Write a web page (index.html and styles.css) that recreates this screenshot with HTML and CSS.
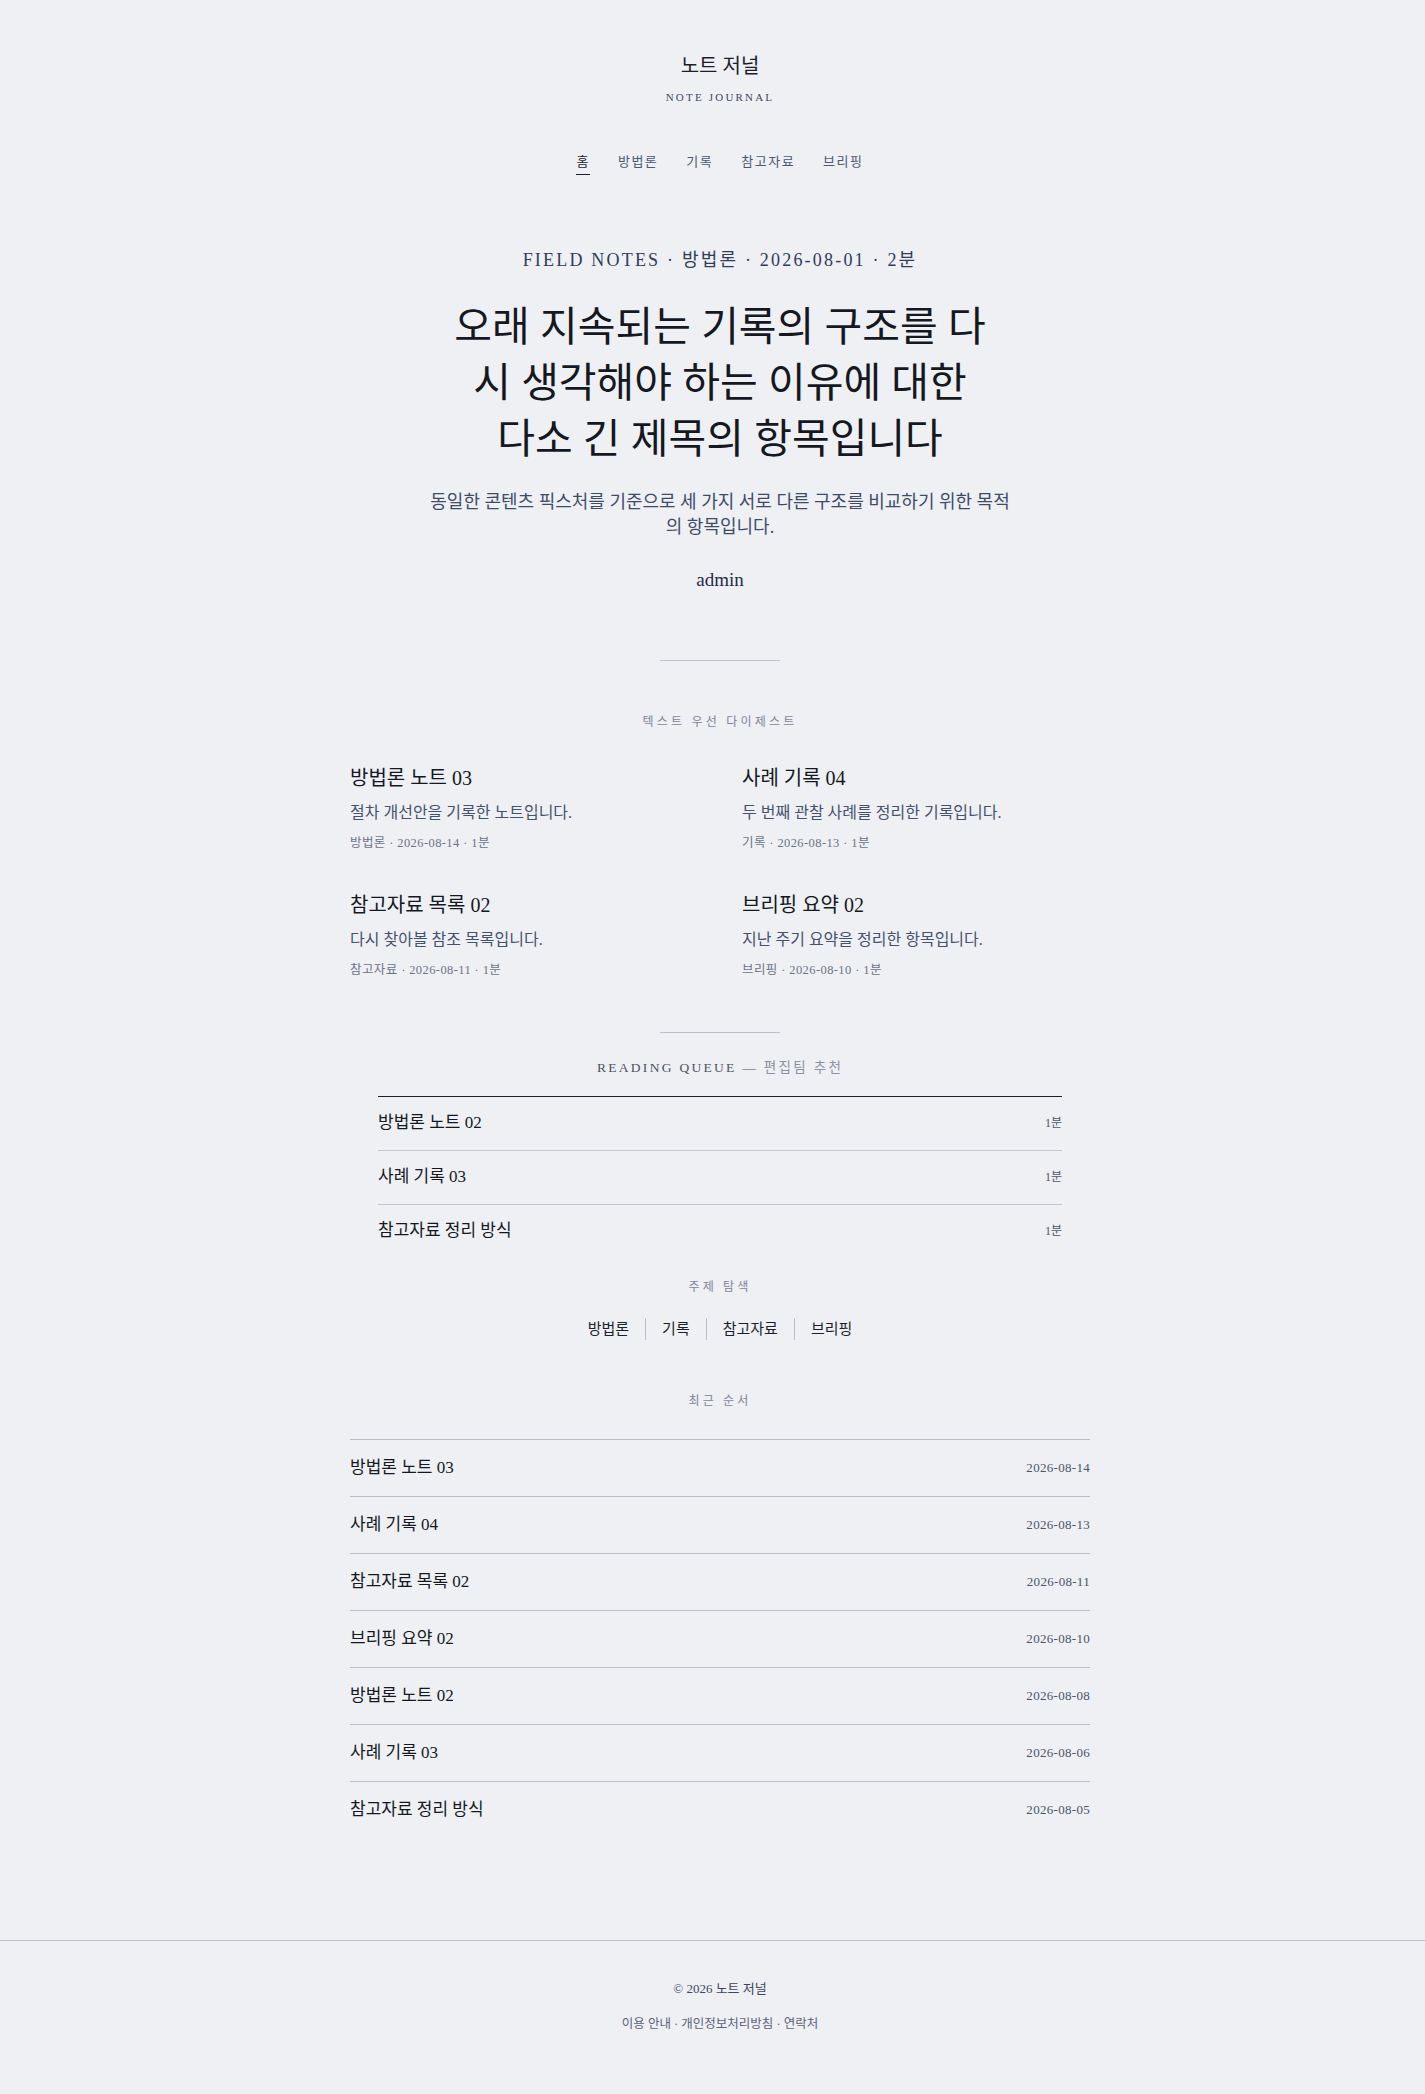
FILE: index.html
```html
<!DOCTYPE html>
<html lang="ko">
<head>
<meta charset="utf-8">
<title>노트 저널</title>
<link rel="stylesheet" href="styles.css">
</head>
<body>
<div class="page">
  <header class="site-header">
    <div class="brand">노트 저널</div>
    <div class="brand-sub">NOTE JOURNAL</div>
    <nav class="nav">
      <a class="nav-link active" href="#">홈</a>
      <a class="nav-link" href="#">방법론</a>
      <a class="nav-link" href="#">기록</a>
      <a class="nav-link" href="#">참고자료</a>
      <a class="nav-link" href="#">브리핑</a>
    </nav>
  </header>

  <main class="main">
    <section class="hero">
      <div class="hero-meta">FIELD NOTES · 방법론 · 2026-08-01 · 2분</div>
      <h1 class="hero-title">오래 지속되는 기록의 구조를 다<br>시 생각해야 하는 이유에 대한<br>다소 긴 제목의 항목입니다</h1>
      <p class="hero-sub">동일한 콘텐츠 픽스처를 기준으로 세 가지 서로 다른 구조를 비교하기 위한 목적<br>의 항목입니다.</p>
      <div class="hero-author">admin</div>
    </section>

    <div class="rule"></div>

    <section class="digest">
      <h2 class="label">텍스트 우선 다이제스트</h2>
      <div class="digest-grid">
        <article class="digest-item">
          <h3 class="digest-title">방법론 노트 03</h3>
          <p class="digest-desc">절차 개선안을 기록한 노트입니다.</p>
          <div class="digest-meta">방법론 · 2026-08-14 · 1분</div>
        </article>
        <article class="digest-item">
          <h3 class="digest-title">사례 기록 04</h3>
          <p class="digest-desc">두 번째 관찰 사례를 정리한 기록입니다.</p>
          <div class="digest-meta">기록 · 2026-08-13 · 1분</div>
        </article>
        <article class="digest-item">
          <h3 class="digest-title">참고자료 목록 02</h3>
          <p class="digest-desc">다시 찾아볼 참조 목록입니다.</p>
          <div class="digest-meta">참고자료 · 2026-08-11 · 1분</div>
        </article>
        <article class="digest-item">
          <h3 class="digest-title">브리핑 요약 02</h3>
          <p class="digest-desc">지난 주기 요약을 정리한 항목입니다.</p>
          <div class="digest-meta">브리핑 · 2026-08-10 · 1분</div>
        </article>
      </div>
    </section>

    <div class="rule rule-2"></div>

    <section class="queue">
      <h2 class="queue-heading">READING QUEUE <span class="queue-dash">—</span> <span class="queue-ko">편집팀 추천</span></h2>
      <ul class="queue-list">
        <li class="queue-row"><span class="queue-title">방법론 노트 02</span><span class="queue-time">1분</span></li>
        <li class="queue-row"><span class="queue-title">사례 기록 03</span><span class="queue-time">1분</span></li>
        <li class="queue-row"><span class="queue-title">참고자료 정리 방식</span><span class="queue-time">1분</span></li>
      </ul>
    </section>

    <section class="topics">
      <h2 class="label">주제 탐색</h2>
      <div class="topic-links">
        <a class="topic" href="#">방법론</a>
        <a class="topic" href="#">기록</a>
        <a class="topic" href="#">참고자료</a>
        <a class="topic" href="#">브리핑</a>
      </div>
    </section>

    <section class="recent">
      <h2 class="label">최근 순서</h2>
      <ul class="recent-list">
        <li class="recent-row"><span class="recent-title">방법론 노트 03</span><span class="recent-date">2026-08-14</span></li>
        <li class="recent-row"><span class="recent-title">사례 기록 04</span><span class="recent-date">2026-08-13</span></li>
        <li class="recent-row"><span class="recent-title">참고자료 목록 02</span><span class="recent-date">2026-08-11</span></li>
        <li class="recent-row"><span class="recent-title">브리핑 요약 02</span><span class="recent-date">2026-08-10</span></li>
        <li class="recent-row"><span class="recent-title">방법론 노트 02</span><span class="recent-date">2026-08-08</span></li>
        <li class="recent-row"><span class="recent-title">사례 기록 03</span><span class="recent-date">2026-08-06</span></li>
        <li class="recent-row"><span class="recent-title">참고자료 정리 방식</span><span class="recent-date">2026-08-05</span></li>
      </ul>
    </section>
  </main>
</div>

<footer class="footer">
  <div class="footer-inner">
    <div class="copyright">© 2026 노트 저널</div>
    <div class="footer-links">이용 안내 · 개인정보처리방침 · 연락처</div>
  </div>
</footer>
</body>
</html>
```

FILE: styles.css
```css
* {
  box-sizing: border-box;
}

html, body {
  margin: 0;
  padding: 0;
}

body {
  background: #eef0f4;
  color: #1b1f2a;
  font-family: "Liberation Serif", "Noto Sans CJK KR", serif;
  font-variant-numeric: oldstyle-nums;
}

a {
  color: inherit;
  text-decoration: none;
}

h1, h2, h3, p, ul {
  margin: 0;
  padding: 0;
}

ul {
  list-style: none;
}

.page {
  padding-left: 15px;
}

/* Header */
.site-header {
  display: flex;
  flex-direction: column;
  align-items: center;
  padding-top: 52px;
}

.brand {
  font-size: 20px;
  line-height: 28px;
  color: #1b1f2a;
}

.brand-sub {
  margin-top: 9px;
  font-size: 11px;
  line-height: 16px;
  letter-spacing: 2.2px;
  color: #3c4660;
}

.nav {
  display: flex;
  gap: 28px;
  margin-top: 47px;
}

.nav-link {
  font-size: 13px;
  line-height: 20px;
  letter-spacing: 1.5px;
  color: #4b5872;
  padding-bottom: 2px;
  border-bottom: 1px solid transparent;
}

.nav-link.active {
  color: #1b1f2a;
  border-bottom-color: #1b1f2a;
}

/* Main */
.main {
  width: 740px;
  margin: 0 auto;
}

.hero {
  display: flex;
  flex-direction: column;
  align-items: center;
  text-align: center;
  padding-top: 73px;
}

.hero-meta {
  font-size: 18px;
  line-height: 24px;
  letter-spacing: 2.2px;
  color: #2f3c5a;
}

.hero-title {
  margin-top: 27px;
  font-weight: 400;
  font-size: 41px;
  line-height: 56px;
  color: #15181f;
}

.hero-sub {
  margin-top: 23px;
  font-size: 18px;
  line-height: 25px;
  color: #3f4c68;
}

.hero-author {
  margin-top: 27px;
  font-size: 19px;
  line-height: 26px;
  color: #1f2b48;
}

.rule {
  width: 120px;
  height: 1px;
  background: #b9c0cc;
  margin: 67px auto 0;
}

.rule-2 {
  margin-top: 54px;
}

.label {
  font-weight: 400;
  font-size: 12px;
  line-height: 16px;
  letter-spacing: 3.2px;
  color: #7d8698;
  text-align: center;
}

/* Digest */
.digest {
  padding-top: 53px;
}

.digest-grid {
  display: grid;
  grid-template-columns: 1fr 1fr;
  column-gap: 44px;
  row-gap: 41px;
  margin-top: 35px;
}

.digest-item {
  display: flex;
  flex-direction: column;
}

.digest-title {
  font-weight: 400;
  font-size: 20px;
  line-height: 26px;
  color: #15181f;
}

.digest-desc {
  margin-top: 11px;
  font-size: 16px;
  line-height: 22px;
  color: #46526b;
}

.digest-meta {
  margin-top: 11px;
  font-size: 12.5px;
  line-height: 16px;
  letter-spacing: 0.4px;
  color: #6b7487;
}

/* Queue */
.queue {
  width: 684px;
  margin: 0 auto;
  padding-top: 26px;
}

.queue-heading {
  font-weight: 400;
  font-size: 13.5px;
  line-height: 18px;
  letter-spacing: 2.3px;
  color: #4a5265;
  text-align: center;
}

.queue-ko {
  color: #8a92a3;
}

.queue-list {
  margin-top: 19px;
  border-top: 1px solid #1b1f2a;
}

.queue-row {
  display: flex;
  justify-content: space-between;
  align-items: center;
  padding: 15px 0 16px;
  border-bottom: 1px solid #c3c8d2;
}

.queue-row:last-child {
  border-bottom: none;
}

.queue-title {
  font-size: 17px;
  line-height: 22px;
  color: #15181f;
}

.queue-time {
  font-size: 12px;
  line-height: 22px;
  color: #4b5468;
}

/* Topics */
.topics {
  padding-top: 21px;
}

.topic-links {
  display: flex;
  justify-content: center;
  margin-top: 23px;
}

.topic {
  font-size: 15px;
  line-height: 22px;
  padding: 0 16px;
  color: #1b1f2a;
  border-left: 1px solid #b9c0cc;
}

.topic:first-child {
  border-left: none;
}

/* Recent */
.recent {
  padding-top: 53px;
}

.recent-list {
  margin-top: 30px;
  border-top: 1px solid #b9c0cc;
}

.recent-row {
  display: flex;
  justify-content: space-between;
  align-items: center;
  padding: 16px 0;
  border-bottom: 1px solid #b9c0cc;
}

.recent-row:last-child {
  border-bottom: none;
}

.recent-title {
  font-size: 17px;
  line-height: 24px;
  color: #15181f;
}

.recent-date {
  font-size: 13px;
  line-height: 24px;
  letter-spacing: 0.3px;
  color: #4b5468;
}

/* Footer */
.footer {
  margin-top: 102px;
  border-top: 1px solid #b9c0cc;
}

.footer-inner {
  padding: 39px 0 54px 15px;
  display: flex;
  flex-direction: column;
  align-items: center;
  gap: 17px;
}

.copyright {
  font-size: 13px;
  line-height: 18px;
  color: #3c4660;
}

.footer-links {
  font-size: 12.5px;
  line-height: 18px;
  color: #5a6378;
}
```
